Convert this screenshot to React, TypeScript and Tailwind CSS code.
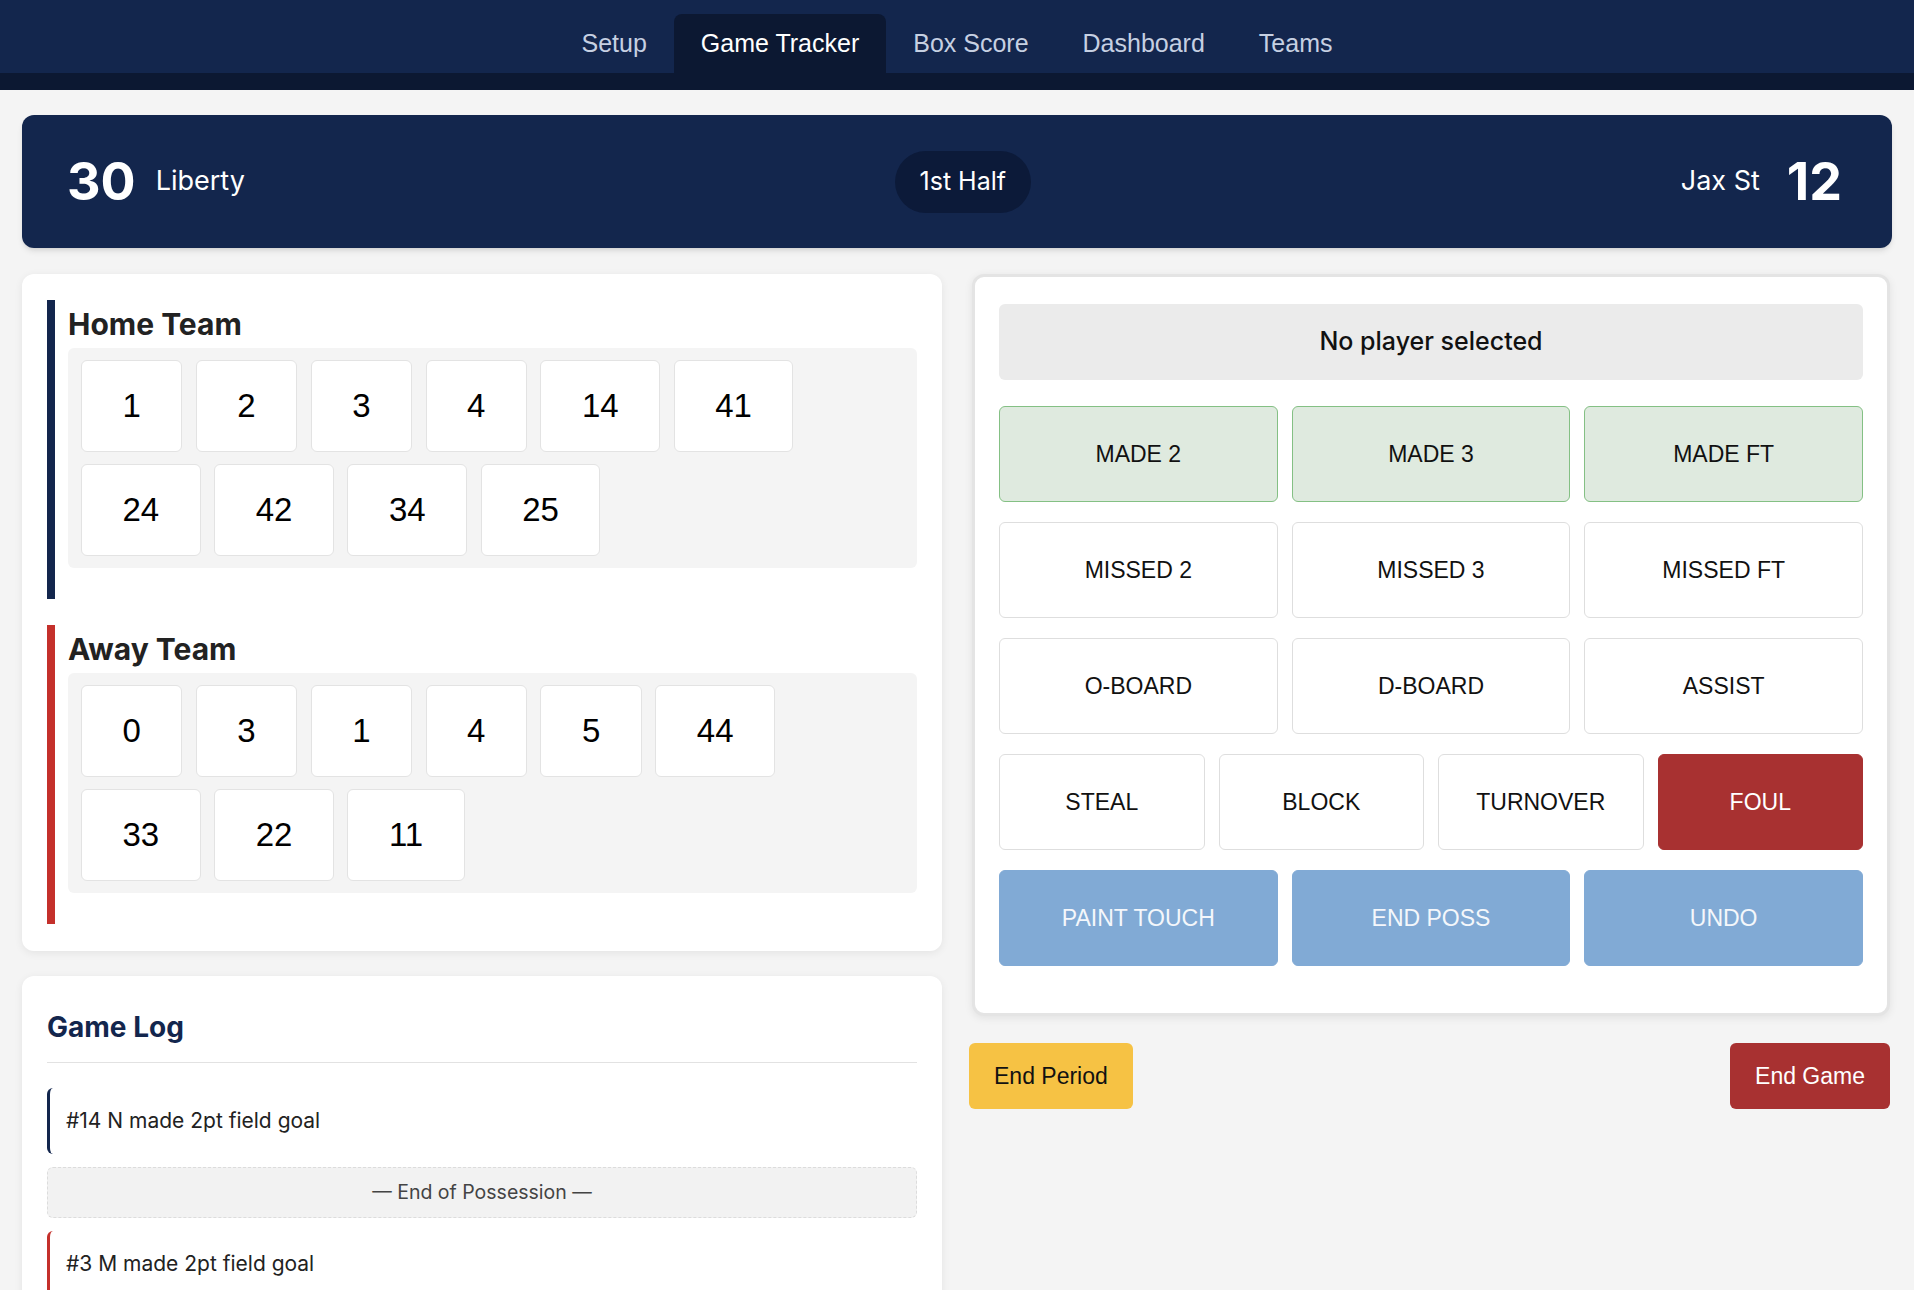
import React from 'react';

const tabs = ['Setup', 'Game Tracker', 'Box Score', 'Dashboard', 'Teams'];

const homePlayers = ['1', '2', '3', '4', '14', '41', '24', '42', '34', '25'];
const awayPlayers = ['0', '3', '1', '4', '5', '44', '33', '22', '11'];

const rows = [
  { cols: 'grid-cols-3', items: ['MADE 2', 'MADE 3', 'MADE FT'], kind: 'made' },
  { cols: 'grid-cols-3', items: ['MISSED 2', 'MISSED 3', 'MISSED FT'], kind: 'plain' },
  { cols: 'grid-cols-3', items: ['O-BOARD', 'D-BOARD', 'ASSIST'], kind: 'plain' },
  { cols: 'grid-cols-4', items: ['STEAL', 'BLOCK', 'TURNOVER', 'FOUL'], kind: 'plain' },
  { cols: 'grid-cols-3', items: ['PAINT TOUCH', 'END POSS', 'UNDO'], kind: 'blue' },
];

const log = [
  { type: 'home', text: '#14 N made 2pt field goal' },
  { type: 'poss' },
  { type: 'away', text: '#3 M made 2pt field goal' },
  { type: 'poss' },
  { type: 'home', text: '#24 K missed 3pt field goal' },
];

function btnClass(kind: string, label: string) {
  if (label === 'FOUL') return 'bg-[#a83131] border border-[#a83131] text-white';
  if (kind === 'made') return 'bg-[#dfeadf] border-[1.5px] border-[#84c084] text-[#111]';
  if (kind === 'blue') return 'bg-[#81aad5] border border-[#81aad5] text-[#f4f7fb]';
  return 'bg-white border border-[#dedede] text-[#111]';
}

function TeamSection({ title, players, bar }: { title: string; players: string[]; bar: string }) {
  return (
    <div className={`border-l-[8px] ${bar} pl-[13px] pt-[6px] pb-[31px]`}>
      <h3 className="text-[30px] leading-[36px] font-bold text-[#222] mb-[6px]">{title}</h3>
      <div className="bg-[#f4f4f4] rounded-md p-[12px] pl-[13px] flex flex-wrap gap-x-[13.5px] gap-y-[12px]">
        {players.map((p, i) => (
          <button
            key={i}
            className="h-[92px] px-[40.5px] bg-white border border-[#e3e3e3] rounded-md text-[33px] text-black font-['Liberation_Sans',Arial,sans-serif]"
          >
            {p}
          </button>
        ))}
      </div>
    </div>
  );
}

export default function App() {
  return (
    <div className="min-h-screen bg-[#f4f4f4] font-['Inter',sans-serif]">
      {/* Top nav */}
      <nav className="bg-[#13264d] border-b-[17px] border-[#0c1832] flex justify-center">
        <div className="flex mt-[14px]">
          {tabs.map((t) => (
            <div
              key={t}
              className={`h-[59px] px-[27px] flex items-center rounded-t-lg text-[25px] font-['Liberation_Sans',Arial,sans-serif] ${
                t === 'Game Tracker' ? 'bg-[#0c1832] text-white' : 'text-[#c6d0e2]'
              }`}
            >
              {t}
            </div>
          ))}
        </div>
      </nav>

      <main className="px-[22px] pt-[25px]">
        {/* Scoreboard */}
        <div className="h-[133px] rounded-xl bg-[#13264d] shadow-md flex items-center justify-between pl-[45px] pr-[50px] text-white">
          <div className="flex items-center gap-[20px]">
            <span className="text-[52px] font-bold leading-none">30</span>
            <span className="text-[27px]">Liberty</span>
          </div>
          <div className="h-[62px] px-[25px] rounded-full bg-[#0c1a39] flex items-center text-[25px]">1st Half</div>
          <div className="flex items-center gap-[27px]">
            <span className="text-[27px]">Jax St</span>
            <span className="text-[52px] font-bold leading-none">12</span>
          </div>
        </div>

        <div className="grid grid-cols-[920px_1fr] gap-[30px] mr-[2px] mt-[26px] items-start">
          {/* Left column */}
          <div className="flex flex-col gap-[25px]">
            <div className="bg-white rounded-xl shadow-[0_2px_8px_rgba(0,0,0,0.07)] px-[25px] pt-[26px] pb-[27px] flex flex-col gap-[26px]">
              <TeamSection title="Home Team" players={homePlayers} bar="border-[#13264d]" />
              <TeamSection title="Away Team" players={awayPlayers} bar="border-[#c4302b]" />
            </div>

            <div className="bg-white rounded-xl shadow-[0_2px_8px_rgba(0,0,0,0.07)] px-[25px] pt-[25px] pb-[25px]">
              <h2 className="text-[28px] leading-[34px] font-bold text-[#13264d] mt-[9px] pb-[18px] border-b border-[#e2e2e2] mb-[25px]">
                Game Log
              </h2>
              <div className="flex flex-col gap-[13px]">
                {log.map((item, i) =>
                  item.type === 'poss' ? (
                    <div
                      key={i}
                      className="h-[51px] bg-[#f2f2f2] border border-dashed border-[#dcdcdc] rounded-md flex items-center justify-center text-[19.5px] text-[#444]"
                    >
                      — End of Possession —
                    </div>
                  ) : (
                    <div
                      key={i}
                      className={`h-[66px] border-l-[3px] rounded-md pl-[16px] flex items-center text-[21px] text-[#222] ${
                        item.type === 'home' ? 'border-[#13264d]' : 'border-[#c4302b]'
                      }`}
                    >
                      {item.text}
                    </div>
                  )
                )}
              </div>
            </div>
          </div>

          {/* Right column */}
          <div>
            <div className="bg-white rounded-xl border-[3px] border-[#e4e4e4] shadow-[0_2px_8px_rgba(0,0,0,0.08)] px-[24px] pt-[27px] pb-[47px]">
              <div className="h-[76px] bg-[#ebebeb] rounded-md flex items-center justify-center text-[25px] font-medium text-[#111] mb-[26px]">
                No player selected
              </div>
              <div className="flex flex-col gap-[20px]">
                {rows.map((r, i) => (
                  <div key={i} className={`grid ${r.cols} gap-[14px]`}>
                    {r.items.map((label) => (
                      <button
                        key={label}
                        className={`h-[96px] rounded-md text-[23px] font-['Liberation_Sans',Arial,sans-serif] ${btnClass(r.kind, label)}`}
                      >
                        {label}
                      </button>
                    ))}
                  </div>
                ))}
              </div>
            </div>

            <div className="flex justify-between mt-[27px] -ml-[3px]">
              <button className="h-[66px] px-[25px] rounded-md bg-[#f6c244] text-[#111] text-[23px] font-['Liberation_Sans',Arial,sans-serif]">
                End Period
              </button>
              <button className="h-[66px] px-[25px] rounded-md bg-[#a83131] text-white text-[23px] font-['Liberation_Sans',Arial,sans-serif]">
                End Game
              </button>
            </div>
          </div>
        </div>
      </main>
    </div>
  );
}
